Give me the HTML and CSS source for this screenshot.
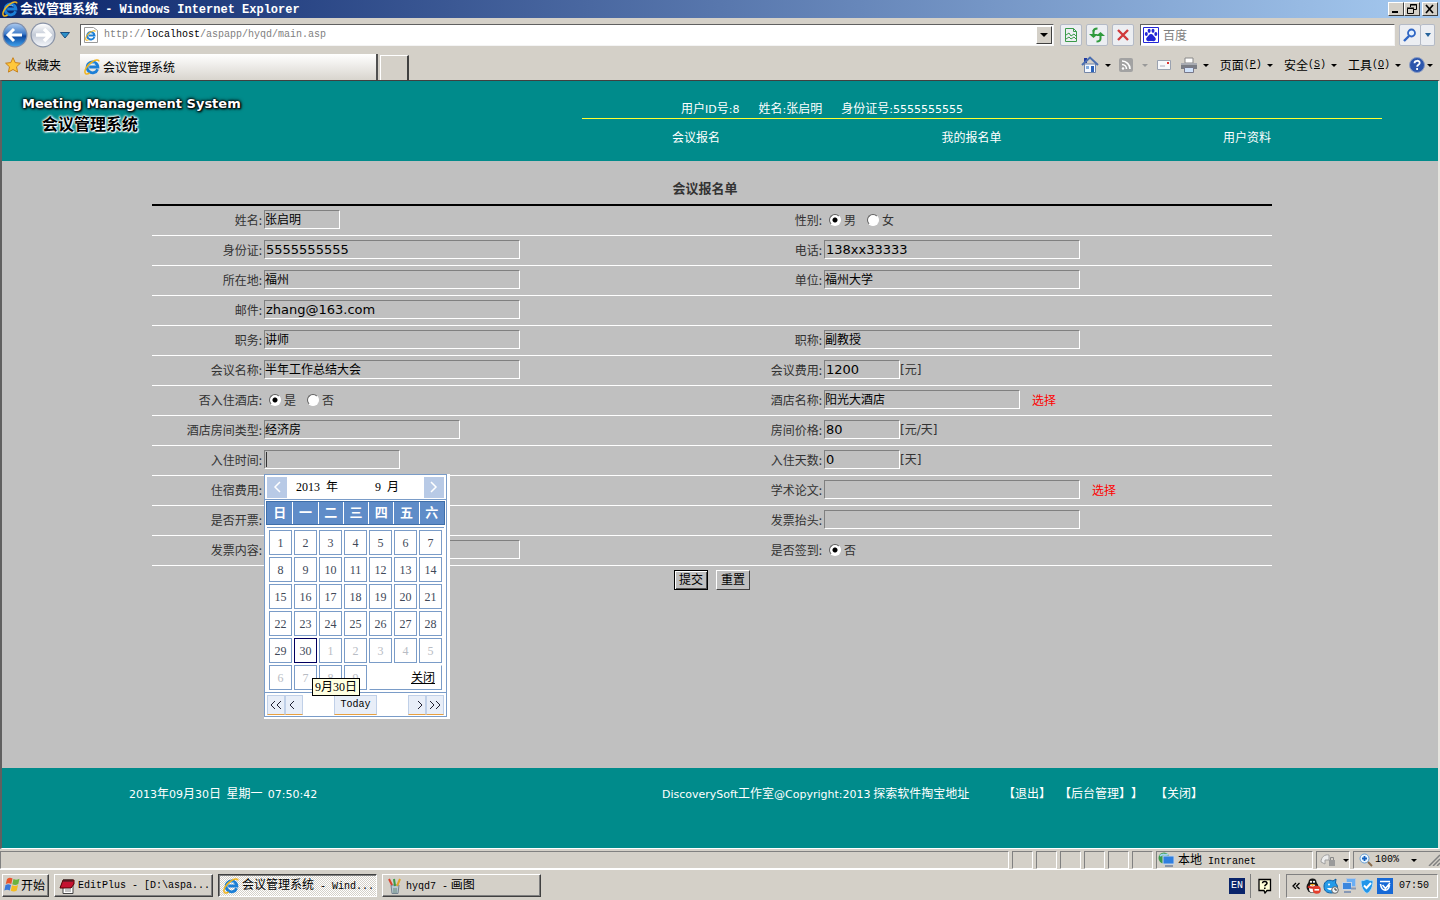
FILE: index.html
```html
<!DOCTYPE html>
<html lang="zh-CN">
<head>
<meta charset="utf-8">
<title>会议管理系统</title>
<link rel="stylesheet" href="styles.css">
</head>
<body>
<svg class="defs" width="0" height="0" aria-hidden="true">
  <defs>
    <linearGradient id="gBlue" x1="0" y1="0" x2="0" y2="1"><stop offset="0" stop-color="#a9c8ee"/><stop offset=".45" stop-color="#3f7bc8"/><stop offset=".55" stop-color="#0b48a0"/><stop offset="1" stop-color="#3fa0ea"/></linearGradient>
    <linearGradient id="gGray" x1="0" y1="0" x2="0" y2="1"><stop offset="0" stop-color="#fff"/><stop offset=".5" stop-color="#c3cad6"/><stop offset="1" stop-color="#f4f6fa"/></linearGradient>
    <symbol id="ie" viewBox="0 0 16 16">
      <path d="M13.6 10.2A5.4 5.4 0 1 1 13.9 8H5.2" fill="none" stroke="#1c7fd6" stroke-width="2.8"/>
      <path d="M4.8 6.6A4 4 0 0 1 11 5" fill="none" stroke="#7cc4f6" stroke-width="1"/>
      <path d="M1.6 14.6C-.6 12.4 3 6 8 3c3.600-2.400 6.800-2.600 7-.6M1.600 14.600c1 .7 2.700.2 4-.6" fill="none" stroke="#f0b41c" stroke-width="1.500"/>
    </symbol>
  </defs>
</svg>

<header class="titlebar">
  <svg class="i16"><use href="#ie"/></svg>
  <h1 class="titlebar-text">会议管理系统<span class="mono">&nbsp;- Windows Internet Explorer</span></h1>
  <div class="winbtns">
    <button class="winbtn" aria-label="最小化"><svg width="12" height="10"><path d="M2 8h6" stroke="#000" stroke-width="2"/></svg></button>
    <button class="winbtn" aria-label="还原"><svg width="12" height="10"><path d="M4.500 3V.5h6v5H8M4 1h7M1.500 4.500h6v5h-6zM1 4h7" fill="none" stroke="#000"/></svg></button>
    <button class="winbtn close" aria-label="关闭窗口"><svg width="12" height="10"><path d="M2 1l7 8M9 1L2 9" stroke="#000" stroke-width="1.700"/></svg></button>
  </div>
</header>

<nav class="navbar" aria-label="导航">
  <div class="history">
    <button class="plain" aria-label="后退"><svg width="28" height="28" viewBox="0 0 28 28"><circle cx="14" cy="14" r="12.500" fill="#7e8ca8"/><circle cx="14" cy="14" r="11.300" fill="url(#gBlue)"/><path d="M7 14h14M13 8l-6 6 6 6" fill="none" stroke="#fff" stroke-width="3"/></svg></button>
    <button class="plain" aria-label="前进"><svg width="28" height="28" viewBox="0 0 28 28"><circle cx="14" cy="14" r="12.500" fill="#8892a6"/><circle cx="14" cy="14" r="11.300" fill="url(#gGray)"/><path d="M7 14h14M15 8l6 6-6 6" fill="none" stroke="#fff" stroke-width="3.500"/></svg></button>
    <button class="plain drop" aria-label="历史"><svg width="10" height="7"><path d="M.5.5h9L5 6z" fill="#2b8fc8" stroke="#1a4d80"/></svg></button>
  </div>
  <div class="address">
    <svg class="i16" viewBox="0 0 16 16"><path d="M1.500.5h9l4 3v12h-13z" fill="#fff" stroke="#9a9a9a"/><svg x="2" y="3" width="11" height="11"><use href="#ie"/></svg></svg>
    <span class="url mono">http://<b>localhost</b>/aspapp/hyqd/main.asp</span>
    <button class="combo" aria-label="地址列表"><svg width="8" height="4"><path d="M0 0h8L4 4z"/></svg></button>
  </div>
  <button class="tool" aria-label="兼容性视图"><svg width="16" height="16" fill="none" stroke="#3a9a4a"><path d="M2.500 1.500h8l3 3v10h-11zM10.500 1.500v3h3"/><path d="M3 8l3-2 2 3 3-2 2 2M3 12l3-2 2 2 3-2 2 2"/></svg></button>
  <button class="tool" aria-label="刷新"><svg width="16" height="16"><path d="M4.500 3v5" stroke="#2f9a3c" stroke-width="2"/><path d="M0 7h9L4.500 11zM7 9h9l-4.500-4z" fill="#2f9a3c"/><path d="M4.500 4.500c0-2 1.500-3 4-3M11.500 8v3.500c0 2-1.500 3-4 3" fill="none" stroke="#2f9a3c" stroke-width="2"/></svg></button>
  <button class="tool" aria-label="停止"><svg width="16" height="16"><path d="M3 3l10 10M13 3L3 13" stroke="#d0393b" stroke-width="2.400"/></svg></button>
  <div class="search">
    <svg width="16" height="16" viewBox="0 0 16 16"><path d="M.5.5h15v15H.5z" fill="#fff" stroke="#2326d6"/><g fill="#2326d6"><ellipse cx="3.300" cy="7" rx="1.500" ry="2"/><ellipse cx="6.100" cy="3.800" rx="1.500" ry="2.100"/><ellipse cx="10" cy="3.800" rx="1.500" ry="2.100"/><ellipse cx="12.800" cy="7" rx="1.500" ry="2"/><path d="M8 7c2 0 2.500 2 4 3.300 1.700 1.700.5 4.200-1.500 3.900-1.700-.3-3.300-.3-5 0-2 .3-3.200-2.200-1.500-3.900C5.500 9 6 7 8 7z"/></g></svg>
    <input type="text" aria-label="搜索" placeholder="百度">
  </div>
  <div class="go">
    <button class="tool" aria-label="开始搜索"><svg width="14" height="14"><circle cx="8.500" cy="5" r="3.500" fill="#e4f1ff" stroke="#2f66c4" stroke-width="1.800"/><path d="M6 8l-5 5" stroke="#2f66c4" stroke-width="2.400"/></svg></button>
    <button class="tool" aria-label="搜索选项"><svg width="6" height="4"><path d="M0 0h6L3 4z" fill="#27649c"/></svg></button>
  </div>
</nav>

<div class="tabbar">
  <button class="plain fav"><svg width="16" height="16"><path d="M8 .7l2.200 4.900 5.200.6-3.900 3.600 1.100 5.300L8 12.500l-4.600 2.600 1.100-5.300L.6 6.200l5.200-.6z" fill="#ffc83a" stroke="#c8801a"/></svg>收藏夹</button>
  <button class="tab"><svg class="i16"><use href="#ie"/></svg>会议管理系统</button>
  <button class="newtab" aria-label="新选项卡"></button>
  <div class="commands">
    <button class="plain" aria-label="主页"><svg width="18" height="18"><path d="M3.500 8h11v8.500h-11z" fill="#f4f8ff" stroke="#7486a8"/><path d="M3 2h3v5H3z" fill="#233aa0"/><path d="M1 9l8-7.500L17 9" fill="none" stroke="#4b6fb0" stroke-width="2"/><path d="M10 10h3v6h-3z" fill="#2a62b8"/><path d="M5 10h3v3H5z" fill="#84aee0"/></svg><i class="arr"></i></button>
    <button class="plain" aria-label="源"><svg width="16" height="16"><rect x="1" y="1" width="14" height="14" rx="2" fill="#a2a2a2"/><g fill="none" stroke="#fff" stroke-width="1.600"><path d="M4 4a8 8 0 0 1 8 8M4 7.500A4.500 4.500 0 0 1 8.500 12"/></g><circle cx="5" cy="11.500" r="1.200" fill="#fff"/></svg><i class="arr dim"></i></button>
    <button class="plain" aria-label="邮件"><svg width="16" height="12"><path d="M1.500 1.500h13v9h-13z" fill="#f7f8fb" stroke="#9aa2b0"/><path d="M11 3h2v2h-2z" fill="#d33"/><path d="M4 7h5" stroke="#aab"/></svg></button>
    <button class="plain" aria-label="打印"><svg width="18" height="16"><path d="M5 1h8v5H5z" fill="#fff" stroke="#888"/><path d="M1 6h16v6H1z" fill="#7a7d84"/><path d="M1 6h16v2H1z" fill="#a8abb2"/><path d="M4.500 10.500h9v5h-9z" fill="#cfe2fa" stroke="#778"/></svg><i class="arr"></i></button>
    <button class="plain">页面<span class="mono">(<u>P</u>)</span><i class="arr"></i></button>
    <button class="plain">安全<span class="mono">(<u>S</u>)</span><i class="arr"></i></button>
    <button class="plain">工具<span class="mono">(<u>O</u>)</span><i class="arr"></i></button>
    <button class="plain help" aria-label="帮助"><svg width="16" height="16"><circle cx="8" cy="8" r="7.500" fill="#2c56ac" stroke="#8a9cc4"/><path d="M5.500 6.200C5.500 3 10.700 3 10.700 6c0 1.800-2.600 1.900-2.600 3.800M8.100 11v2" fill="none" stroke="#fff" stroke-width="1.800"/></svg><i class="arr"></i></button>
  </div>
</div>

<div class="page">
  <header class="site-head">
    <div class="logo">
      <div class="logo-en">Meeting Management System</div>
      <div class="logo-cn">会议管理系统</div>
    </div>
    <div class="account">
      <div class="who"><span>用户<span class="lat">ID</span>号<span class="lat">:8</span></span><span>姓名<span class="lat">:</span>张启明</span><span>身份证号<span class="lat">:5555555555</span></span></div>
      <nav class="menu" aria-label="主菜单"><a href="#">会议报名</a><a href="#">我的报名单</a><a href="#">用户资料</a></nav>
    </div>
  </header>

  <main class="main">
    <form class="form">
      <h2 class="form-title">会议报名单</h2>
      <table class="fields">
        <tr><th><label for="xm">姓名:</label></th><td><input id="xm" class="box w76" value="张启明"></td>
          <th>性别:</th><td><div class="cell radios"><label><input type="radio" name="sex" checked>男</label><label><input type="radio" name="sex">女</label></div></td></tr>
        <tr><th><label for="sfz">身份证:</label></th><td><input id="sfz" class="box latin w256" value="5555555555"></td>
          <th><label for="dh">电话:</label></th><td><input id="dh" class="box latin w256" value="138xx33333"></td></tr>
        <tr><th><label for="szd">所在地:</label></th><td><input id="szd" class="box w256" value="福州"></td>
          <th><label for="dw">单位:</label></th><td><input id="dw" class="box w256" value="福州大学"></td></tr>
        <tr><th><label for="yj">邮件:</label></th><td><input id="yj" class="box latin w256" value="zhang@163.com"></td><th></th><td></td></tr>
        <tr><th><label for="zw">职务:</label></th><td><input id="zw" class="box w256" value="讲师"></td>
          <th><label for="zc">职称:</label></th><td><input id="zc" class="box w256" value="副教授"></td></tr>
        <tr><th><label for="hy">会议名称:</label></th><td><input id="hy" class="box w256" value="半年工作总结大会"></td>
          <th><label for="hf">会议费用:</label></th><td><div class="cell"><input id="hf" class="box latin w76" value="1200"><span class="unit">[元]</span></div></td></tr>
        <tr><th>否入住酒店:</th><td><div class="cell radios"><label><input type="radio" name="stay" checked>是</label><label><input type="radio" name="stay">否</label></div></td>
          <th><label for="jd">酒店名称:</label></th><td><div class="cell"><input id="jd" class="box w196" value="阳光大酒店"><a class="pick" href="#">选择</a></div></td></tr>
        <tr><th><label for="fx">酒店房间类型:</label></th><td><input id="fx" class="box w196" value="经济房"></td>
          <th><label for="fj">房间价格:</label></th><td><div class="cell"><input id="fj" class="box latin w76" value="80"><span class="unit">[元/天]</span></div></td></tr>
        <tr><th><label for="rz">入住时间:</label></th><td>
          <div class="cell date">
            <div class="box w136 focus"><input id="rz" class="bare"></div>
            <section class="cal" aria-label="日历">
              <div class="cal-frame">
                <div class="cal-head"><button type="button" class="step" aria-label="上月"><svg width="8" height="12"><path d="M7 1L2 6l5 5" fill="none" stroke="#fff" stroke-width="1.500"/></svg></button><span class="year">2013&nbsp; 年</span><span class="month">9&nbsp; 月</span><button type="button" class="step" aria-label="下月"><svg width="8" height="12"><path d="M1 1l5 5-5 5" fill="none" stroke="#fff" stroke-width="1.500"/></svg></button></div>
                <div class="week"><span>日</span><span>一</span><span>二</span><span>三</span><span>四</span><span>五</span><span>六</span></div>
                <table class="days">
                  <tr><td>1</td><td>2</td><td>3</td><td>4</td><td>5</td><td>6</td><td>7</td></tr>
                  <tr><td>8</td><td>9</td><td>10</td><td>11</td><td>12</td><td>13</td><td>14</td></tr>
                  <tr><td>15</td><td>16</td><td>17</td><td>18</td><td>19</td><td>20</td><td>21</td></tr>
                  <tr><td>22</td><td>23</td><td>24</td><td>25</td><td>26</td><td>27</td><td>28</td></tr>
                  <tr><td>29</td><td class="on">30</td><td class="off">1</td><td class="off">2</td><td class="off">3</td><td class="off">4</td><td class="off">5</td></tr>
                  <tr><td class="off">6</td><td class="off">7</td><td class="off">8</td><td class="off">9</td><td class="shut" colspan="3"><a href="#">关闭</a></td></tr>
                </table>
                <div class="cal-foot">
                  <div class="pair"><button type="button" aria-label="上一年"><svg width="12" height="10"><path d="M5 1L1 5l4 4M11 1L7 5l4 4" fill="none" stroke="#223"/></svg></button><button type="button" aria-label="上一月"><svg width="12" height="10"><path d="M6 1L2 5l4 4" fill="none" stroke="#223"/></svg></button></div>
                  <button type="button" class="today mono">Today</button>
                  <div class="pair"><button type="button" aria-label="下一月"><svg width="12" height="10"><path d="M7 1l4 4-4 4" fill="none" stroke="#223"/></svg></button><button type="button" aria-label="下一年"><svg width="12" height="10"><path d="M1 1l4 4-4 4M7 1l4 4-4 4" fill="none" stroke="#223"/></svg></button></div>
                </div>
              </div>
              <div class="tip" role="tooltip">9月30日</div>
            </section>
          </div></td>
          <th><label for="ts">入住天数:</label></th><td><div class="cell"><input id="ts" class="box latin w76" value="0"><span class="unit">[天]</span></div></td></tr>
        <tr><th>住宿费用:</th><td></td>
          <th><label for="lw">学术论文:</label></th><td><div class="cell"><input id="lw" class="box w256"><a class="pick" href="#">选择</a></div></td></tr>
        <tr><th>是否开票:</th><td></td>
          <th><label for="tt">发票抬头:</label></th><td><input id="tt" class="box w256"></td></tr>
        <tr><th><label for="nr">发票内容:</label></th><td><input id="nr" class="box w256"></td>
          <th>是否签到:</th><td><div class="cell radios"><label><input type="radio" name="sign" checked>否</label></div></td></tr>
      </table>
      <div class="actions"><button type="button" class="push default">提交</button><button type="button" class="push">重置</button></div>
    </form>
  </main>

  <footer class="site-foot">
    <div class="clock"><span class="lat">2013</span>年<span class="lat">09</span>月<span class="lat">30</span>日 &nbsp;星期一 &nbsp;<span class="lat">07:50:42</span></div>
    <div class="copy"><span class="lat">DiscoverySoft</span>工作室<span class="lat">@Copyright:2013</span> 探索软件掏宝地址</div>
    <div class="foot-links"><a href="#">【退出】</a><a href="#">【后台管理】</a>】<a class="last" href="#">【关闭】</a></div>
  </footer>
</div>

<div class="status">
  <div class="pane grow"></div>
  <div class="pane slot"></div><div class="pane slot"></div><div class="pane slot"></div><div class="pane slot"></div><div class="pane slot"></div><div class="pane slot"></div>
  <div class="pane zone"><svg width="18" height="16"><circle cx="6" cy="6" r="5.500" fill="#3a9a48"/><path d="M2 4c3-3 5 0 8-2" stroke="#9fd4f2" stroke-width="2" fill="none"/><rect x="5" y="4" width="11" height="8" fill="#2f7fe0" stroke="#c3d3e8"/><path d="M7 14h8" stroke="#8894a8" stroke-width="2"/></svg><span>本地<span class="mono">&nbsp;Intranet</span></span></div>
  <div class="pane lock"><svg width="18" height="14"><path d="M1 9c0-5 4-8 8-7v5H5v4z" fill="#ececec" stroke="#a0a0a0"/><path d="M9 7h6v6H9z" fill="#9a9a9a"/><path d="M10.500 7V4.500h3V7" fill="none" stroke="#888"/></svg><i class="arr"></i></div>
  <div class="pane zoom"><svg width="14" height="14"><circle cx="5.500" cy="5.500" r="4.500" fill="#eaf6ff" stroke="#6b9fd2"/><path d="M3 5.500h5M5.500 3v5" stroke="#1462c0" stroke-width="1.800"/><path d="M9 9l4 4" stroke="#8a6b4a" stroke-width="2"/></svg><span class="mono">100%</span><i class="arr"></i><svg class="grip" width="12" height="12"><path d="M1 12L12 1M5 12l7-7M9 12l3-3" stroke="#808080" stroke-width="1.500"/></svg></div>
</div>

<footer class="taskbar">
  <button class="task start"><svg width="16" height="16"><path d="M3 2c2-1.500 3.500-1.500 5.500-.4L7.300 7C5.300 6 3.800 6 1.800 7z" fill="#e8542c"/><path d="M9.500 2c2 1 3.500 1 6-.3L14.300 7c-2 1.200-4 1.200-6 .3z" fill="#6cb33f"/><path d="M1.500 8c2-1 3.500-1 5.500 0l-1.200 5.500c-2-1-3.500-1-5.500 0z" fill="#3a78d8"/><path d="M8 8.300c2 1 4 1 6-.2l-1.200 5.500c-2 1.200-4 1.200-6 .2z" fill="#f4bc20"/></svg>开始</button>
  <button class="task"><svg width="16" height="16"><path d="M4 5h10v10.500H4z" fill="#fff" stroke="#444"/><path d="M4 2h11v4l-3 4H1z" fill="#c41230" stroke="#500"/><path d="M5 1v3M7 1v3M9 1v3M11 1v3M13 1v3" stroke="#222"/><path d="M6 11h6M6 13h6" stroke="#888"/></svg><span class="mono">EditPlus - [D:\aspa...</span></button>
  <button class="task active"><svg class="i16"><use href="#ie"/></svg><span>会议管理系统<span class="mono">&nbsp;- Wind...</span></span></button>
  <button class="task"><svg width="16" height="16"><path d="M4 7h8l-1 8.500H5z" fill="#b9c8d4" stroke="#75848f"/><path d="M5 7L2 1" stroke="#d8432e" stroke-width="2"/><path d="M8 8L7 1" stroke="#3c9a46" stroke-width="2"/><path d="M10 8l3-7" stroke="#e0a52c" stroke-width="2"/><path d="M7 10v5M9 10v5" stroke="#687"/></svg><span><span class="mono">hyqd7 -</span> 画图</span></button>
  <div class="tray-side">
    <span class="lang">EN</span>
    <div class="helpbox"><svg width="14" height="16"><path d="M1 1.500h11.500v11H9L7 15l-1-2.500H1z" fill="#ffffd8" stroke="#000" stroke-width="1.300"/><path d="M4.500 5.300c0-2.600 4.500-2.500 4.500 0 0 1.300-2.200 1.400-2.200 3M6.800 9.500v1.500" fill="none" stroke="#000" stroke-width="1.500"/></svg></div>
    <div class="tray">
      <svg width="8" height="8"><path d="M4 1L1 4l3 3M7.500 1l-3 3 3 3" fill="none" stroke="#000" stroke-width="1.300"/></svg>
      <svg width="16" height="16"><ellipse cx="7.500" cy="9" rx="6" ry="6" fill="#171717"/><circle cx="7.500" cy="4.500" r="4" fill="#171717"/><ellipse cx="7.500" cy="10.500" rx="3.500" ry="4" fill="#fff"/><circle cx="6" cy="3.800" r="1.100" fill="#fff"/><circle cx="9" cy="3.800" r="1.100" fill="#fff"/><path d="M4.500 6h6l-3 2z" fill="#f5a51f"/><path d="M3 8.500c3 1.500 6 1.500 9 0" stroke="#d42a20" stroke-width="2" fill="none"/><circle cx="11.800" cy="11.800" r="4" fill="#e4402e"/><path d="M9.500 11.800h4.600" stroke="#fff" stroke-width="1.600"/></svg>
      <svg width="16" height="16"><path d="M1 8c0-5 5-7 9-5l3-2-.5 4c4 4 2 10-4 10S1 12 1 8z" fill="#259be8" stroke="#0c5ea6"/><path d="M4 10c2 3 6 3 8 0z" fill="#fff"/><circle cx="6" cy="6.500" r="1" fill="#fff"/><circle cx="12" cy="12" r="3.300" fill="#f0f5f8" stroke="#666"/><path d="M12 10v2h2" fill="none" stroke="#333"/></svg>
      <svg width="16" height="16"><rect x="5.500" y=".5" width="9" height="8" fill="#6aaef4" stroke="#b5c6de"/><rect x="1.500" y="4.500" width="9" height="7" fill="#3b86de" stroke="#c5d4e8"/><path d="M3 14h7M10 10.500h5" stroke="#8798b4" stroke-width="2"/></svg>
      <svg width="16" height="16"><path d="M8 1c2 1.200 4 1.700 6 1.700C14 9 12 13 8 15.500 4 13 2 9 2 2.700 4 2.700 6 2.200 8 1z" fill="#2196ea" stroke="#b3dcf8"/><path d="M5 7.500L7.500 10 12 5" fill="none" stroke="#fff" stroke-width="2"/></svg>
      <svg width="16" height="16"><path d="M0 0h16v16H0z" fill="#1769d6"/><path d="M3 3.500h10M3.500 6c1 8 8 8 9 1M5.500 7l3 3.500L13 5" fill="none" stroke="#fff" stroke-width="1.600"/></svg>
      <span class="mono time">07:50</span>
    </div>
  </div>
</footer>
</body>
</html>
```

FILE: styles.css
```css
* { box-sizing: border-box; }

body {
  margin: 0;
  height: 100vh;
  display: flex;
  flex-direction: column;
  overflow: hidden;
  background: #d4d0c8;
  color: #000;
  font: 12px/16px "Noto Sans CJK SC", sans-serif;
  text-spacing-trim: space-all;
}

button, input { font: inherit; color: inherit; margin: 0; padding: 0; border-radius: 0; }
button { white-space: nowrap; }
svg { display: block; flex: none; }
a { color: inherit; text-decoration: none; }
.defs { position: absolute; }
.mono { font-family: "Liberation Mono", monospace; font-size: 10px; white-space: nowrap; }
.lat { font-family: "DejaVu Sans", sans-serif; font-size: 11px; }
.i16 { width: 16px; height: 16px; }
.plain { border: 0; background: none; display: flex; align-items: center; }
.arr { border: 3px solid transparent; border-top-color: #000; border-bottom: 0; flex: none; }
.arr.dim { border-top-color: #999; }

/* Title bar */
.titlebar {
  height: 18px;
  flex: none;
  display: flex;
  align-items: center;
  gap: 2px;
  padding: 0 2px;
  background: linear-gradient(90deg, #0a246a, #a6caf0);
  color: #fff;
}
.titlebar-text { margin: 0; flex: 1; font-size: 13px; line-height: 18px; font-weight: bold; }
.titlebar-text .mono { font-size: 12px; }
.winbtns { display: flex; }
.winbtn {
  width: 16px;
  height: 14px;
  display: flex;
  align-items: center;
  justify-content: center;
  background: #d4d0c8;
  border: 1px solid;
  border-color: #fff #404040 #404040 #fff;
}
.winbtn.close { margin-left: 2px; }

/* Address row */
.navbar { height: 34px; flex: none; display: flex; align-items: center; gap: 4px; padding: 0 5px 0 1px; }
.history { display: flex; align-items: center; width: 75px; }
.history .drop { margin-left: 3px; }
.address, .search {
  height: 22px;
  display: flex;
  align-items: center;
  background: #fff;
  border: 1px solid;
  border-color: #606060 #f4f4f4 #f4f4f4 #606060;
}
.address { flex: 1; gap: 5px; padding-left: 2px; margin-right: 2px; }
.url { flex: 1; color: #808080; }
.url b { color: #000; font-weight: normal; }
.combo {
  width: 16px;
  height: 18px;
  margin-right: 1px;
  display: flex;
  align-items: center;
  justify-content: center;
  background: #d4d0c8;
  border: 1px solid;
  border-color: #fff #404040 #404040 #fff;
}
.tool {
  width: 22px;
  height: 22px;
  display: flex;
  align-items: center;
  justify-content: center;
  background: #eceef2;
  border: 1px solid #b4bac6;
  border-radius: 2px;
}
.search { width: 255px; margin-left: 2px; gap: 4px; padding-left: 2px; }
.search input { flex: 1; min-width: 0; border: 0; outline: 0; background: none; }
.search input::placeholder { color: #808080; opacity: 1; }
.go { display: flex; }
.go .tool + .tool { width: 14px; border-left: 0; }

/* Tab row */
.tabbar { height: 28px; flex: none; display: flex; align-items: flex-end; padding: 0 7px 0 5px; }
.fav { width: 75px; height: 28px; gap: 4px; padding-bottom: 2px; }
.tab {
  width: 298px;
  height: 26px;
  display: flex;
  align-items: center;
  gap: 3px;
  padding: 0 4px;
  background: linear-gradient(#fff, #d8d5ce);
  border: 0;
  border-right: 2px solid #505050;
}
.newtab { width: 29px; height: 25px; margin-left: 2px; background: #d4d0c8; border: solid; border-width: 1px 2px 0 1px; border-color: #fff #404040 #fff #fff; }
.commands { margin-left: auto; height: 28px; display: flex; align-items: center; gap: 11px; padding-bottom: 2px; }
.commands .plain { gap: 5px; }
.commands .mono { margin-left: -5px; }
.commands .plain:nth-child(1) { gap: 6px; margin-right: -4px; }
.commands .plain:nth-child(2) { gap: 8px; margin-right: -3px; }
.commands .plain:nth-child(3) { margin-right: -3px; }
.commands .help { gap: 2px; margin-left: -3px; }

/* Web page */
.page {
  flex: 1;
  min-height: 0;
  display: flex;
  flex-direction: column;
  background: #c0c0c0;
  border: solid;
  border-width: 1px 2px 1px;
  border-color: #404040 #e8e6e0 #fff #606060;
}
.site-head {
  flex: none;
  height: 80px;
  display: flex;
  justify-content: space-between;
  padding: 0 56px 0 20px;
  background: #008b8b;
  color: #fff;
}
.logo { padding-top: 13px; font-weight: bold; }
.logo-en { font: bold 13px/20px "DejaVu Sans", sans-serif; text-shadow: 0 0 2px #000, 0 0 3px #000, 1px 1px 2px #000, 0 0 4px #000; }
.logo-cn { padding-left: 20px; font-size: 16px; line-height: 18px; color: #000; text-shadow: 0 0 1px #fff, 0 0 2px #fff, 1px 1px 1px #fff, 0 0 3px #fff, 0 0 3px #fff; }
.account { width: 800px; padding-top: 18px; }
.who { display: flex; gap: 19px; padding-left: 99px; height: 20px; line-height: 18px; border-bottom: 1px solid #ff3; }
.menu { display: flex; justify-content: space-between; padding: 9px 111px 0 90px; line-height: 18px; }

.main { flex: 1; padding: 12px 16px 0 0; color: #333; }
.form { width: 1120px; max-width: 100%; margin: 0 auto; }
.form-title { margin: 0; height: 33px; padding-right: 14px; font-size: 13px; line-height: 30px; text-align: center; border-bottom: 2px solid #000; }
.fields { width: 100%; table-layout: fixed; border-collapse: separate; border-spacing: 0; }
.fields > tbody > tr { height: 30px; }
.fields > tbody > tr > th, .fields > tbody > tr > td { padding: 0 0 2px; height: 30px; border-bottom: 1px solid #fff; }
.fields > tbody > tr > th { width: 10%; padding-right: 2px; text-align: right; font-weight: normal; }
.fields > tbody > tr > td { width: 40%; }
.cell { display: flex; align-items: center; }
.box {
  display: block;
  height: 19px;
  padding: 0 0 2px 0;
  line-height: 16px;
  background: #c0c0c0;
  color: #000;
  border: 1px solid;
  border-color: #808080 #fff #fff #808080;
  outline: 0;
}
.latin { font-family: "DejaVu Sans", sans-serif; font-size: 13px; padding: 0 0 0 1px; }
.w76 { width: 76px; }
.w136 { width: 136px; }
.w196 { width: 196px; }
.w256 { width: 256px; }
.focus { padding: 1px; }
.bare { display: block; width: 100%; height: 15px; border: 0; border-left: 1px solid #333; background: none; outline: 0; }
.unit { font-family: "DejaVu Sans", "Noto Sans CJK SC", sans-serif; }
.pick { margin-left: 12px; color: #f00; }
.radios { gap: 11px; padding-left: 5px; }
.radios label { display: flex; align-items: center; gap: 3px; }
.radios input {
  appearance: none;
  width: 12px;
  height: 12px;
  border: 1px solid;
  border-color: #606060 #fff #fff #606060;
  border-radius: 6px;
  background: #fff;
}
.radios input:checked { background: radial-gradient(circle, #000 2px, #fff 3px); }
.actions { display: flex; justify-content: center; gap: 8px; padding: 4px 0 0; }
.push {
  width: 34px;
  height: 20px;
  line-height: 16px;
  padding-bottom: 2px;
  background: #c0c0c0;
  color: #000;
  border: 1px solid;
  border-color: #fff #404040 #404040 #fff;
}
.push.default { border-color: #000; box-shadow: inset 1px 1px #fff, inset -1px -1px #505050; }

/* Calendar popup */
.date { position: relative; }
.cal {
  position: absolute;
  left: 0;
  top: 24px;
  z-index: 2;
  width: 186px;
  padding: 0 3px 2px 0;
  background: #fff;
  color: #404858;
  font-family: "Liberation Serif", "Noto Sans CJK SC", serif;
}
.cal-frame { border: 1px solid #7a9cc8; }
.cal-head { display: flex; align-items: center; height: 25px; padding: 2px; color: #000; border-bottom: 1px solid #7a9cc8; }
.step { width: 20px; height: 21px; display: flex; align-items: center; justify-content: center; background: #b8cae6; border: 0; }
.year { margin-left: 9px; }
.month { margin: 0 auto; padding-left: 12px; }
.week { display: grid; grid-template-columns: repeat(7, 1fr); margin: 1px 1px 3px; border: 1px solid #3f6ea8; background: #5f8cc8; color: #fff; font-size: 13px; font-weight: bold; line-height: 22px; text-align: center; }
.week span + span { border-left: 1px solid #fff; }
.days { width: 177px; table-layout: fixed; margin: 0 0 0 2px; border-collapse: separate; border-spacing: 2px; box-shadow: 0 -1px #7a9cc8; }
.days td { height: 25px; padding: 0; line-height: 20px; text-align: center; border: 1px solid #7a9cc8; }
.days .off { color: #b8bcc4; }
.days .on { border-color: #000060; }
.days .shut { padding-right: 6px; text-align: right; color: #000; border-color: #fff #7a9cc8 #7a9cc8 #fff; }
.shut a { text-decoration: underline; }
.cal-foot { display: flex; justify-content: space-between; padding: 2px 2px 1px; border-top: 1px solid #7a9cc8; color: #000; }
.pair { display: flex; }
.cal-foot button { min-width: 18px; height: 20px; padding: 0 2px; background: #e8eef8; border: 1px solid #c0d0e8; border-bottom-color: #e8a040; }
.cal-foot .today { width: 43px; }
.tip { position: absolute; left: 48px; top: 204px; padding: 0 2px; color: #000; background: #ffffe1; border: 1px solid #000; white-space: nowrap; }

/* Page footer */
.site-foot { flex: none; height: 80px; display: flex; padding: 16px 0 0 127px; line-height: 18px; background: #008b8b; color: #fff; white-space: nowrap; }
.clock { width: 533px; }
.copy { width: 341px; }
.foot-links a + a { margin-left: 8px; }
.foot-links a.last { margin-left: 12px; }

/* Status bar */
.status { height: 21px; flex: none; display: flex; gap: 3px; padding-top: 2px; border-bottom: 1px solid #fff; }
.pane { display: flex; align-items: center; border: 1px solid; border-color: #808080 #fff #fff #808080; }
.grow { flex: 1; }
.slot { width: 21px; }
.zone { width: 157px; gap: 2px; padding-left: 1px; }
.lock { width: 34px; gap: 5px; padding-left: 3px; }
.zoom { width: 87px; gap: 2px; padding-left: 5px; border-right: 0; }
.zoom .arr { margin-left: 10px; }
.grip { margin-left: auto; }

/* Task bar */
.taskbar { height: 30px; flex: none; display: flex; align-items: center; gap: 5px; padding: 1px 2px 0; }
.task {
  width: 159px;
  height: 23px;
  display: flex;
  align-items: center;
  gap: 3px;
  padding: 0 4px;
  background: #d4d0c8;
  border: 1px solid;
  border-color: #fff #404040 #404040 #fff;
  box-shadow: inset -1px -1px #808080;
}
.task.start { width: 47px; gap: 1px; padding: 0 1px 2px; }
.task.active {
  background: repeating-conic-gradient(#fff 0 25%, #d4d0c8 0 50%) 0 0 / 2px 2px;
  border-color: #404040 #fff #fff #404040;
  box-shadow: inset 1px 1px #808080;
}
.tray-side { margin-left: auto; display: flex; align-items: center; }
.lang { padding: 0 2px; background: #0a246a; color: #fff; font: 10px/16px "Liberation Mono", monospace; }
.helpbox { height: 24px; margin: 0 6px 0 5px; padding: 4px 7px; border: solid; border-width: 0 1px; border-color: #fff #fff #fff #808080; }
.tray { height: 24px; display: flex; align-items: center; gap: 2px; padding: 0 8px 0 5px; border: 1px solid; border-color: #808080 #fff #fff #808080; }
.tray svg:first-child { margin-right: 3px; }
.time { margin-left: 4px; }
```
